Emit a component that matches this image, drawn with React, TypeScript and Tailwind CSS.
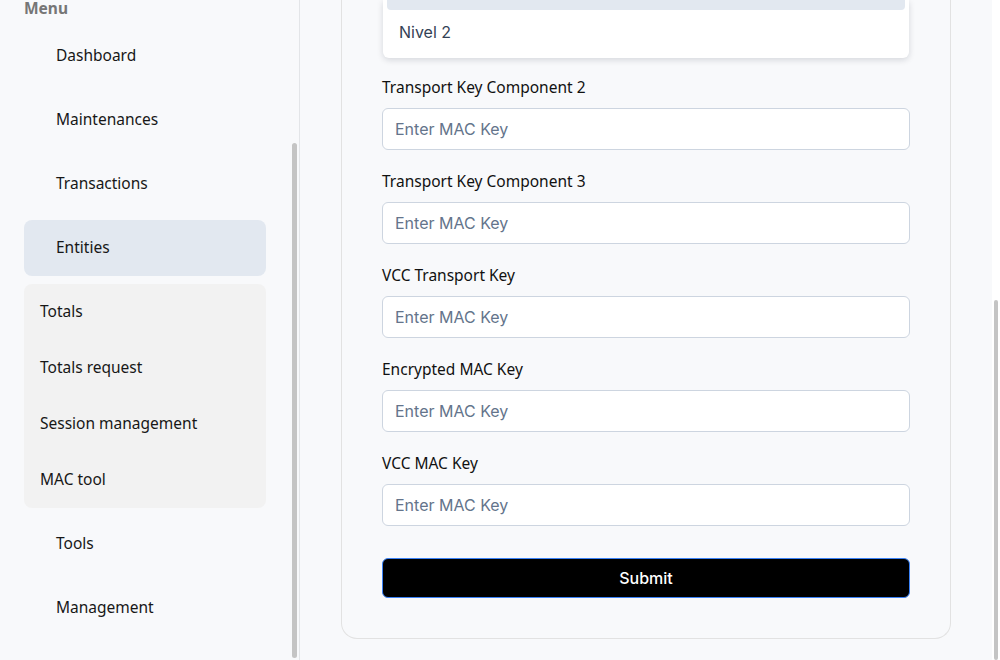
const menuTop = ['Dashboard', 'Maintenances', 'Transactions'];
const subItems = ['Totals', 'Totals request', 'Session management', 'MAC tool'];
const menuBottom = ['Tools', 'Management'];
const fields = [
  'Transport Key Component 2',
  'Transport Key Component 3',
  'VCC Transport Key',
  'Encrypted MAC Key',
  'VCC MAC Key',
];

const sans = "font-['Noto_Sans',sans-serif]";
const ui = "font-['Inter',sans-serif]";

const Sidebar = () => (
  <aside className="flex h-full w-[300px] shrink-0 border-r border-[#e3e5e8] bg-[#f8f9fb]">
    <nav className={`flex w-[290px] flex-col gap-2 pl-6 pr-6 text-[15.5px] text-[#171717] ${sans}`}>
      <div className="-mt-1 h-6 text-[15.5px] leading-6 font-bold text-[#767676]">Menu</div>
      {menuTop.map(item => (
        <div key={item} className="flex h-14 items-center rounded-lg pl-8">
          {item}
        </div>
      ))}
      <div className="flex h-14 items-center rounded-lg bg-[#e2e8f0] pl-8">Entities</div>
      <div className="flex flex-col rounded-lg bg-[#f2f2f2]">
        {subItems.map(item => (
          <div key={item} className="flex h-14 items-center pl-4">
            {item}
          </div>
        ))}
      </div>
      {menuBottom.map(item => (
        <div key={item} className="flex h-14 items-center rounded-lg pl-8">
          {item}
        </div>
      ))}
    </nav>
    <div className="w-[9px] pl-[2px]">
      <div className="mt-[143px] h-[515px] w-[5px] rounded-full bg-[#c4c4c4]" />
    </div>
  </aside>
);

const Field = ({ label }: { label: string }) => (
  <div className="flex flex-col">
    <label className={`h-6 text-[15.5px] leading-[23px] text-[#111] ${sans}`}>{label}</label>
    <input
      placeholder="Enter MAC Key"
      className={`mt-2 h-[42px] rounded-md border border-[#cdd5e0] bg-white px-3 text-base text-slate-700 outline-none placeholder:text-[#64748b] ${ui}`}
    />
  </div>
);

export default function App() {
  return (
    <div className="flex h-[660px] w-[1000px] overflow-hidden bg-[#f8f9fb]">
      <Sidebar />
      <main className="flex flex-1">
        <div className="flex-1 pl-[41px]">
          <div className="flex w-[610px] flex-col rounded-b-2xl border-x border-b border-[#e2e2e2] px-10 pb-10">
            <div className="mx-[1px] flex flex-col rounded-b-md bg-white px-1 pb-1.5 shadow-[0_2px_6px_rgba(15,23,42,0.15)]">
              <div className="h-[10px] rounded-b-sm bg-[#e2e8f0]" />
              <div className={`mt-0.5 flex h-10 items-center px-3 text-base text-[#334155] ${ui}`}>
                Nivel 2
              </div>
            </div>
            <div className="mt-[18px] flex flex-col gap-5">
              {fields.map(f => (
                <Field key={f} label={f} />
              ))}
            </div>
            <button className={`mt-8 h-10 rounded-md border border-[#3b82f6] bg-black text-base font-medium text-white ${ui}`}>
              Submit
            </button>
          </div>
        </div>
        <div className="w-2 bg-white pl-[2px]">
          <div className="mt-[300px] h-[360px] w-[4px] rounded-full bg-[#c4c4c4]" />
        </div>
      </main>
    </div>
  );
}
